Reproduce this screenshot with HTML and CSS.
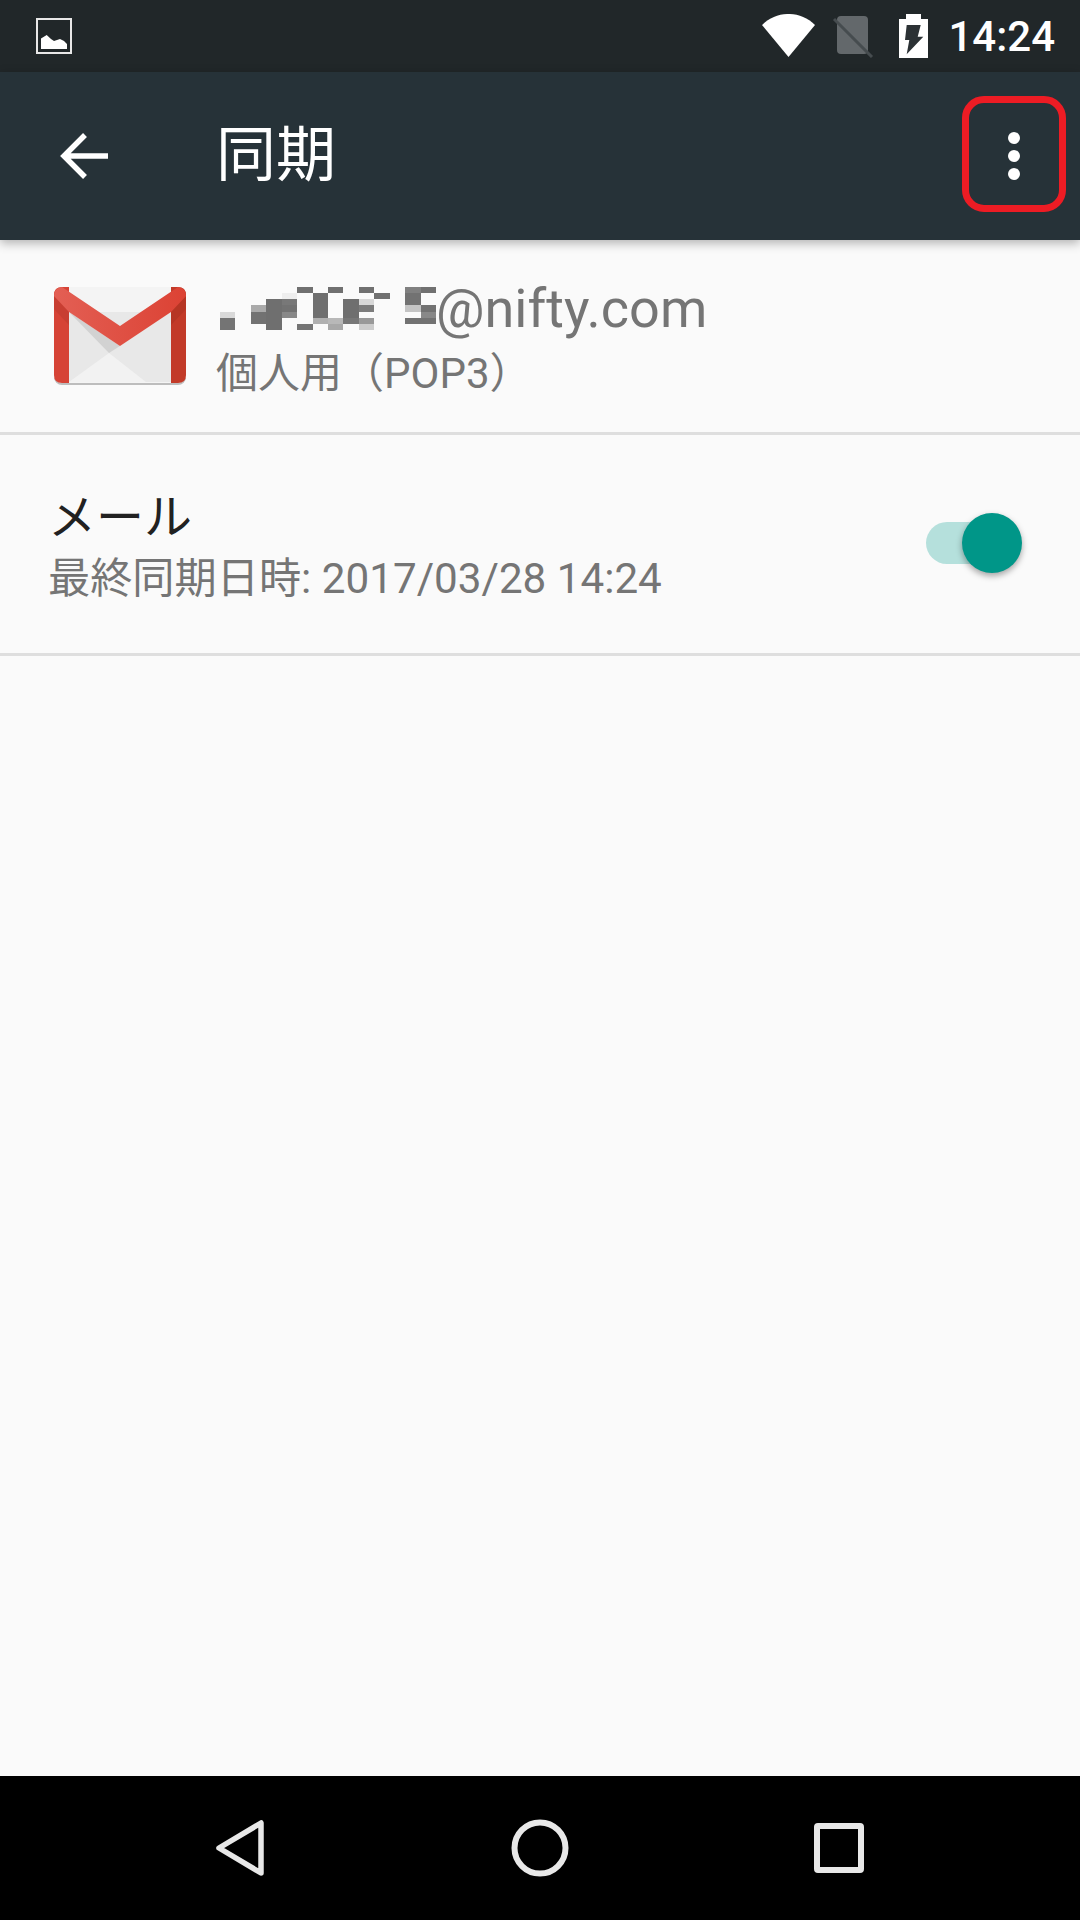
FILE: index.html
```html
<!DOCTYPE html>
<html lang="ja">
<head>
  <meta charset="UTF-8">
  <title>同期</title>
  <link rel="stylesheet" href="styles.css">
</head>
<body>

<div class="pantalla">
  <!-- Barra de estado -->
  <div class="status-bar">
    <svg class="ic-foto" width="36" height="36" viewBox="0 0 36 36">
      <rect x="1" y="1" width="34" height="34" fill="none" stroke="#e8e8e8" stroke-width="2"/>
      <path d="M5 31V20.500L10.700 17L15 21L18 23L24 21L28 23L31 26V31Z" fill="#fff"/>
    </svg>
    <div class="status-right">
      <svg class="ic-wifi" width="54" height="44" viewBox="0 0 54 44">
        <path d="M0 11C15 -3.700 38 -3.700 53 11L26.500 43Z" fill="#fff"/>
      </svg>
      <svg class="ic-sim" width="42" height="44" viewBox="0 0 42 44">
        <path d="M9 2H32Q36 2 36 6V36Q36 40 32 40H9Q5 40 5 36V6Q5 2 9 2Z" fill="#63686b"/>
        <path d="M2 5L40 43" stroke="#464c4f" stroke-width="3"/>
      </svg>
      <svg class="ic-bat" width="30" height="44" viewBox="0 0 30 44">
        <path d="M0 5H7V0H22V5H29V44H0Z" fill="#fff"/>
        <path d="M7.700 11H21.700L18.700 22.700H24.300L7.700 40.300L10.300 26H6Z" fill="#2b3134"/>
      </svg>
      <span class="hora">14:24</span>
    </div>
  </div>

  <!-- Barra de acciones -->
  <header class="app-bar">
    <svg class="ic-back" width="48" height="48" viewBox="0 0 48 48">
      <path d="M25 3L4 24L25 45M4 24H48" fill="none" stroke="#fff" stroke-width="5.500"/>
    </svg>
    <h1 class="titulo">同期</h1>
    <div class="menu">
      <span class="punto"></span>
      <span class="punto"></span>
      <span class="punto"></span>
    </div>
  </header>

  <main class="contenido">
    <section class="cuenta">
      <svg class="ic-gmail" width="132" height="98" viewBox="0 0 132 98">
        <defs>
          <linearGradient id="gmailRojo" x1="0" y1="0" x2="1" y2="0">
            <stop offset="0" stop-color="#e35f54"/>
            <stop offset="1" stop-color="#dc4234"/>
          </linearGradient>
        </defs>
        <rect x="0" y="2" width="132" height="96" rx="8" fill="#bdbdbd"/>
        <rect x="0" y="0" width="132" height="96" rx="8" fill="#f4f4f4"/>
        <path d="M15 25H117V95H15Z" fill="#e8e8e8"/>
        <path d="M15 95L55 66L92 95Z" fill="#f2f2f2"/>
        <path d="M15 25L66 59L55 66Z" fill="#d2d2d2"/>
        <path d="M0 8Q0 0 8 0H15V96H8Q0 96 0 88Z" fill="#d64336"/>
        <path d="M117 0H124Q132 0 132 8V88Q132 96 124 96H117Z" fill="#c23a28"/>
        <path d="M0 9L15 24V38L0 22Z" fill="#b93a2e" opacity=".5"/>
        <path d="M132 9L117 24V38L132 22Z" fill="#a93020" opacity=".5"/>
        <path d="M8 0L66 39L124 0Q132 1 132 9L117 25L66 59L15 25L0 9Q0 1 8 0Z" fill="url(#gmailRojo)"/>
      </svg>
      <div class="cuenta-textos">
        <div class="cuenta-mail">
          <!-- Direccion tapada con mosaico -->
          <svg class="mosaico" width="216" height="43" viewBox="0 0 14 7" preserveAspectRatio="none" shape-rendering="crispEdges">
            <rect x="5" y="0" width="1" height="1" fill="#707070"/>
            <rect x="7" y="0" width="1" height="1" fill="#707070"/>
            <rect x="9" y="0" width="1" height="1" fill="#707070"/>
            <rect x="12" y="0" width="1" height="1" fill="#808080"/>
            <rect x="13" y="0" width="1" height="1" fill="#707070"/>
            <rect x="4" y="1" width="1" height="1" fill="#eeeeee"/>
            <rect x="6" y="1" width="1" height="4" fill="#6f6f6f"/>
            <rect x="10" y="1" width="1" height="1" fill="#707070"/>
            <rect x="12" y="1" width="1" height="2" fill="#727272"/>
            <rect x="3" y="2" width="1" height="5" fill="#6f6f6f"/>
            <rect x="4" y="2" width="1" height="1" fill="#787878"/>
            <rect x="8" y="2" width="1" height="3" fill="#6f6f6f"/>
            <rect x="9" y="2" width="1" height="1" fill="#d8d8d8"/>
            <rect x="2" y="3" width="1" height="1" fill="#aaaaaa"/>
            <rect x="4" y="3" width="1" height="1" fill="#727272"/>
            <rect x="9" y="3" width="1" height="1" fill="#7c7c7c"/>
            <rect x="12" y="3" width="1" height="1" fill="#c4c4c4"/>
            <rect x="13" y="3" width="1" height="1" fill="#727272"/>
            <rect x="0" y="4" width="1" height="1" fill="#d9d9d9"/>
            <rect x="2" y="4" width="1" height="2" fill="#727272"/>
            <rect x="4" y="4" width="1" height="1" fill="#888888"/>
            <rect x="13" y="4" width="1" height="1" fill="#888888"/>
            <rect x="0" y="5" width="1" height="2" fill="#747474"/>
            <rect x="6" y="5" width="1" height="1" fill="#b0b0b0"/>
            <rect x="7" y="5" width="1" height="1" fill="#b8b8b8"/>
            <rect x="8" y="5" width="1" height="1" fill="#777777"/>
            <rect x="9" y="5" width="1" height="1" fill="#999999"/>
            <rect x="12" y="5" width="2" height="1" fill="#727272"/>
            <rect x="5" y="6" width="1" height="1" fill="#747474"/>
            <rect x="7" y="6" width="1" height="1" fill="#a8a8a8"/>
            <rect x="9" y="6" width="1" height="1" fill="#cccccc"/>
          </svg>
          <span class="dominio">@nifty.com</span>
        </div>
        <div class="cuenta-tipo">個人用（POP3）</div>
      </div>
    </section>

    <section class="fila-sync">
      <div class="fila-textos">
        <div class="fila-titulo">メール</div>
        <div class="fila-resumen">最終同期日時: 2017/03/28 14:24</div>
      </div>
      <div class="switch">
        <span class="switch-pista"></span>
        <span class="switch-bola"></span>
      </div>
    </section>
  </main>

  <!-- Barra de navegacion -->
  <nav class="nav-bar">
    <svg width="60" height="60" viewBox="0 0 60 60">
      <path d="M51 5V55L9 30Z" fill="none" stroke="#e8e8e8" stroke-width="5.500" stroke-linejoin="round"/>
    </svg>
    <svg width="60" height="60" viewBox="0 0 60 60">
      <circle cx="30" cy="30" r="25.500" fill="none" stroke="#e8e8e8" stroke-width="6"/>
    </svg>
    <svg width="60" height="60" viewBox="0 0 60 60">
      <rect x="8" y="8" width="44" height="44" rx="1" fill="none" stroke="#e8e8e8" stroke-width="6"/>
    </svg>
  </nav>
</div>

</body>
</html>
```

FILE: styles.css
```css
/* Pantalla de ajustes de sincronizacion */
body {
  margin: 0;
  font-family: Roboto, "Noto Sans CJK JP", sans-serif;
  background-color: #fafafa;
}
.pantalla {
  width: 1080px;
  height: 1920px;
  display: flex;
  flex-direction: column;
  overflow: hidden;
}
.status-bar {
  height: 72px;
  flex-shrink: 0;
  display: flex;
  justify-content: space-between;
  align-items: center;
  padding: 0 25px 0 36px;
  background-color: #212729;
}
.status-right {
  display: flex;
  align-items: center;
}
.ic-wifi {
  margin-right: 16px;
}
.ic-sim {
  margin-right: 25px;
}
.ic-bat {
  margin-right: 19px;
}
.hora {
  font-size: 42px;
  font-weight: 500;
  color: #fff;
}
.app-bar {
  height: 168px;
  flex-shrink: 0;
  display: flex;
  align-items: center;
  padding: 0 14px 0 60px;
  background-color: #263238;
  box-shadow: 0 3px 10px rgba(0, 0, 0, 0.3);
  position: relative;
}
.titulo {
  margin: 0 0 0 108px;
  font-size: 60px;
  line-height: 70px;
  font-weight: 400;
  color: #fff;
  flex: 1;
}
.menu {
  box-sizing: border-box;
  width: 104px;
  height: 116px;
  margin-bottom: 4px;
  padding-top: 4px;
  border: 7px solid #ed1c24;
  border-radius: 22px;
  display: flex;
  flex-direction: column;
  justify-content: center;
  align-items: center;
  gap: 6px;
}
.punto {
  width: 12px;
  height: 12px;
  border-radius: 50%;
  background-color: #fff;
}
.contenido {
  flex: 1;
}
.cuenta {
  height: 192px;
  display: flex;
  align-items: center;
  padding-left: 54px;
  border-bottom: 3px solid #dedede;
}
.ic-gmail {
  margin-right: 30px;
}
.cuenta-textos {
  margin-top: 6px;
}
.cuenta-mail {
  display: flex;
  align-items: center;
  height: 64px;
  font-size: 54px;
  color: #757575;
}
.mosaico {
  margin-left: 4px;
}
.cuenta-tipo {
  margin-top: 6px;
  font-size: 42px;
  line-height: 56px;
  color: #757575;
}
.fila-sync {
  height: 218px;
  display: flex;
  justify-content: space-between;
  align-items: center;
  padding: 0 58px 0 48px;
  border-bottom: 3px solid #dedede;
}
.fila-textos {
  margin-top: 9px;
}
.fila-titulo {
  font-size: 48px;
  line-height: 60px;
  color: #212121;
}
.fila-resumen {
  font-size: 42.2px;
  line-height: 62px;
  color: #757575;
}
.switch {
  width: 96px;
  height: 60px;
  margin-bottom: 2px;
  position: relative;
}
.switch-pista {
  position: absolute;
  left: 0;
  top: 9px;
  width: 70px;
  height: 42px;
  border-radius: 21px;
  background-color: #b5e0dc;
}
.switch-bola {
  position: absolute;
  right: 0;
  top: 0;
  width: 60px;
  height: 60px;
  border-radius: 50%;
  background-color: #009688;
  box-shadow: 0 3px 6px rgba(0, 0, 0, 0.35);
}
.nav-bar {
  height: 144px;
  flex-shrink: 0;
  display: flex;
  justify-content: space-between;
  align-items: center;
  padding: 0 211px 0 210px;
  background-color: #000;
}
```
